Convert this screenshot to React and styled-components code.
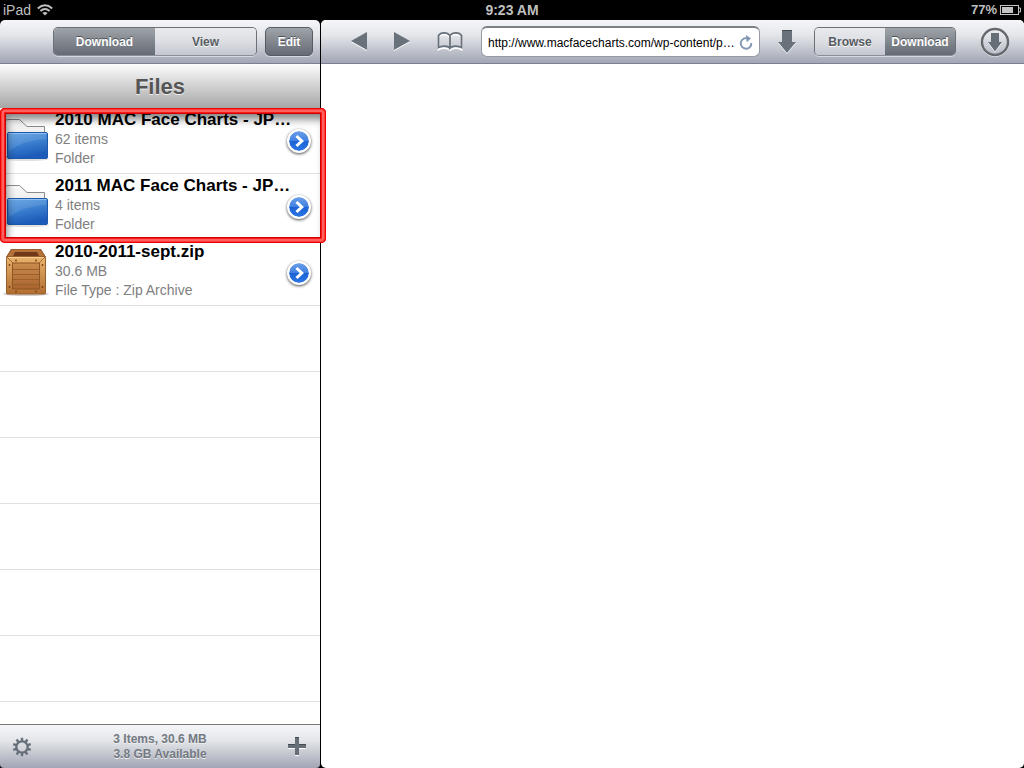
import styled, { createGlobalStyle, css } from "styled-components";

const files = [
  { name: "2010 MAC Face Charts - JP…", size: "62 items", kind: "Folder", icon: "folder" },
  { name: "2011 MAC Face Charts - JP…", size: "4 items", kind: "Folder", icon: "folder" },
  { name: "2010-2011-sept.zip", size: "30.6 MB", kind: "File Type : Zip Archive", icon: "crate" },
];
const emptyRows = [1, 2, 3, 4, 5, 6, 7];

const WifiIcon = () => (
  <svg width="16" height="12" viewBox="0 0 16 12" fill="none" stroke="#bfbfbf" strokeWidth="2">
    <path d="M0.8 4.4Q8 -2 15.2 4.4" />
    <path d="M3.4 7Q8 3 12.6 7" />
    <path d="M8 11.6L5.4 9Q8 6.8 10.6 9Z" fill="#bfbfbf" stroke="none" />
  </svg>
);

const BatteryIcon = () => (
  <svg width="21" height="10" viewBox="0 0 21 10">
    <rect x="0.5" y="0.5" width="18" height="9" fill="none" stroke="#c4c4c4" />
    <rect x="2" y="2" width="11" height="6" fill="#c4c4c4" />
    <path d="M19 3h1.5v4H19" fill="none" stroke="#c4c4c4" />
  </svg>
);

const BookIcon = () => (
  <svg width="26" height="19" viewBox="0 0 26 19" fill="none" strokeWidth="1.8">
    <path d="M13 17C10.5 14.500 5 14.500 1.500 16.500V4C4 0.500 10 0.500 13 4C16 0.500 22 0.500 24.500 4V16.500C21 14.500 15.500 14.500 13 17V4" stroke="#fff" transform="translate(0 1)" />
    <path d="M13 16C10.5 13.500 5 13.500 1.500 15.500V3.500C4 0 10 0 13 3.500C16 0 22 0 24.500 3.500V15.500C21 13.500 15.500 13.500 13 16V3.500" stroke="#69717b" />
  </svg>
);

const ReloadIcon = () => (
  <svg width="14" height="15" viewBox="0 0 14 15">
    <path d="M8 3.200A5.300 5.300 0 1 0 12.300 8" fill="none" stroke="#8295b3" strokeWidth="1.900" />
    <path d="M7 0L12 3.600L7.600 7.200Z" fill="#8295b3" />
  </svg>
);

const GearIcon = () => (
  <svg width="20" height="20" viewBox="0 0 20 20" stroke="#666e78" fill="none">
    <circle cx="10" cy="10" r="5.700" strokeWidth="2.300" />
    {[0, 36, 72, 108, 144, 180, 216, 252, 288, 324].map((a) => (
      <path key={a} d="M10 0.800V4" strokeWidth="2.400" transform={`rotate(${a} 10 10)`} />
    ))}
  </svg>
);

const FolderIcon = () => (
  <svg width="48" height="48" viewBox="0 0 48 48">
    <defs>
      <linearGradient id="blue" x1="0" y1="0" x2="0.3" y2="1">
        <stop offset="0" stopColor="#5c9fe2" />
        <stop offset="0.5" stopColor="#3b80d0" />
        <stop offset="1" stopColor="#1c5bb8" />
      </linearGradient>
      <linearGradient id="paper" x1="0" y1="0" x2="0" y2="1">
        <stop offset="0" stopColor="#fafafa" />
        <stop offset="1" stopColor="#d8d8d8" />
      </linearGradient>
    </defs>
    <ellipse cx="24" cy="42" rx="23" ry="2" fill="#000" opacity="0.12" />
    <path d="M3.5 40V4.5Q3.500 2.500 5.500 2.500H17.500L25 9.500H42.500V40Z" fill="url(#paper)" stroke="#8c8c8c" />
    <rect x="5.500" y="15.500" width="40" height="26" rx="1.500" fill="url(#blue)" stroke="#1e58ad" />
    <path d="M6.500 16.500H44.500" stroke="#8dc0f0" />
    <path d="M7 17H44V22Q22 23 7 34Z" fill="#fff" opacity="0.1" />
  </svg>
);

const CrateIcon = () => (
  <svg width="48" height="48" viewBox="0 0 48 48">
    <defs>
      <linearGradient id="wood" x1="0" y1="0" x2="0" y2="1">
        <stop offset="0" stopColor="#e8b36d" />
        <stop offset="1" stopColor="#b26e30" />
      </linearGradient>
      <linearGradient id="panel" x1="0" y1="0" x2="0" y2="1">
        <stop offset="0" stopColor="#c98b4d" />
        <stop offset="1" stopColor="#a9642f" />
      </linearGradient>
    </defs>
    <ellipse cx="24" cy="45" rx="23" ry="2" fill="#000" opacity="0.18" />
    <path d="M9.500 0H38.500L43.500 8H4.500Z" fill="#b5713a" stroke="#8d5124" />
    <path d="M13 3H35L37 7H11Z" fill="#70391a" />
    <rect x="4.500" y="8" width="39" height="37" rx="1" fill="url(#wood)" stroke="#99602b" />
    <path d="M5 8.500H43" stroke="#f5cf91" />
    <rect x="10.500" y="14" width="27" height="26" fill="url(#panel)" stroke="#8f5523" />
    <path d="M11 20.500H37M11 25.500H37M11 30.500H37M11 35.500H37" stroke="#9c602b" />
    <path d="M5 8L11 14M43 8L37 14M5 45L11 40M43 45L37 40" stroke="#a76a34" />
    <g fill="#754019">
      <circle cx="7.500" cy="16" r="0.9" /><circle cx="40.500" cy="16" r="0.9" />
      <circle cx="7.500" cy="38" r="0.9" /><circle cx="40.500" cy="38" r="0.9" />
      <circle cx="14" cy="11.500" r="0.9" /><circle cx="34" cy="11.500" r="0.9" />
      <circle cx="14" cy="42.500" r="0.9" /><circle cx="34" cy="42.500" r="0.9" />
    </g>
  </svg>
);

const App = () => {
  return (
    <Screen>
      <GlobalStyle />
      <StatusBar>
        <StatusSide>iPad <WifiIcon /></StatusSide>
        <span>9:23 AM</span>
        <StatusSide $end>77% <BatteryIcon /></StatusSide>
      </StatusBar>
      <Panes>
        <Sidebar>
          <Toolbar $end>
            <Segmented>
              <Segment $wide $active>Download</Segment>
              <Segment $wide>View</Segment>
            </Segmented>
            <EditButton>Edit</EditButton>
          </Toolbar>
          <Heading>Files</Heading>
          <ListArea>
            <FileList>
              {files.map((file) => (
                <FileRow key={file.name}>
                  {file.icon === "folder" ? <FolderIcon /> : <CrateIcon />}
                  <FileInfo>
                    <h2>{file.name}</h2>
                    <p>{file.size}</p>
                    <p>{file.kind}</p>
                  </FileInfo>
                  <Disclosure aria-label={`Open ${file.name}`}>
                    <svg width="20" height="20" viewBox="0 0 20 20" fill="none">
                      <path d="M7.500 5L12.800 10L7.500 15" stroke="#fff" strokeWidth="3" />
                    </svg>
                  </Disclosure>
                </FileRow>
              ))}
              {emptyRows.map((row) => (
                <FileRow key={row} />
              ))}
            </FileList>
            <Highlight />
          </ListArea>
          <BottomBar>
            <IconButton aria-label="Settings"><GearIcon /></IconButton>
            <Summary>
              3 Items, 30.6 MB
              <br />
              3.8 GB Available
            </Summary>
            <IconButton aria-label="Add">
              <svg width="18" height="19" viewBox="0 0 18 19">
                <path d="M7 1H11V8H18V12H11V19H7V12H0V8H7Z" fill="#fff" />
                <path d="M7 0H11V7H18V11H11V18H7V11H0V7H7Z" fill="#666e78" />
                <path d="M0 7.500H7M11 7.500H18M7 0.500H11" stroke="#454b53" />
              </svg>
            </IconButton>
          </BottomBar>
        </Sidebar>
        <Browser>
          <Toolbar>
            <NavGroup>
              <IconButton aria-label="Back">
                <svg width="16" height="19" viewBox="0 0 16 19">
                  <path d="M0 10L16 1V19Z" fill="#fff" />
                  <path d="M0 9L16 0V18Z" fill="#69717b" />
                </svg>
              </IconButton>
              <IconButton aria-label="Forward">
                <svg width="16" height="19" viewBox="0 0 16 19">
                  <path d="M16 10L0 1V19Z" fill="#fff" />
                  <path d="M16 9L0 0V18Z" fill="#69717b" />
                </svg>
              </IconButton>
              <IconButton aria-label="Bookmarks"><BookIcon /></IconButton>
            </NavGroup>
            <AddressBar>
              <input aria-label="Address" defaultValue="http://www.macfacecharts.com/wp-content/p…" />
              <ReloadButton aria-label="Reload"><ReloadIcon /></ReloadButton>
            </AddressBar>
            <IconButton aria-label="Save page">
              <svg width="18" height="24" viewBox="0 0 18 24">
                <path d="M4 1H14V13H18L9 24L0 13H4Z" fill="#fff" />
                <path d="M4 0H14V12H18L9 23L0 12H4Z" fill="#69717b" />
                <path d="M4 0.500H14" stroke="#454b53" />
              </svg>
            </IconButton>
            <Segmented>
              <Segment>Browse</Segment>
              <Segment $active>Download</Segment>
            </Segmented>
            <DownloadsButton aria-label="Downloads">
              <svg width="30" height="30" viewBox="0 0 30 30">
                <circle cx="15" cy="15.500" r="13" fill="none" stroke="#fff" strokeWidth="2.500" />
                <circle cx="15" cy="15" r="13" fill="none" stroke="#666a70" strokeWidth="2.500" />
                <path d="M11 7H19V16H22L15 25.500L8 16H11Z" fill="#fff" />
                <path d="M11 6H19V15H22L15 24.500L8 15H11Z" fill="#666e78" />
              </svg>
            </DownloadsButton>
          </Toolbar>
        </Browser>
      </Panes>
    </Screen>
  );
};
export default App;

const GlobalStyle = createGlobalStyle`
  * {
    box-sizing: border-box;
    margin: 0;
    padding: 0;
  }
  body {
    background: #000;
    font-family: "Liberation Sans", Arial, sans-serif;
  }
  button {
    border: none;
    background: none;
    font-family: inherit;
    cursor: pointer;
  }
  svg {
    display: block;
    flex-shrink: 0;
  }
`;

const chrome = css`
  background: linear-gradient(#f5f6f8, #e4e6ea 35%, #c6c9d1 65%, #a1a5b5);
`;
const darkButton = css`
  color: #fff;
  text-shadow: 0 -1px 0 #4b5057;
  background: linear-gradient(#a0a4aa, #82878e 50%, #656b74);
`;

const Screen = styled.div`
  display: flex;
  flex-direction: column;
  height: 100vh;
`;

const StatusBar = styled.header`
  display: grid;
  grid-template-columns: 1fr auto 1fr;
  align-items: center;
  height: 20px;
  padding: 0 3px;
  color: #bfbfbf;
  font-size: 14px;
  font-weight: bold;
  line-height: 20px;
`;

const StatusSide = styled.div`
  display: flex;
  align-items: center;
  gap: ${(props) => (props.$end ? "3px" : "6px")};
  justify-content: ${(props) => (props.$end ? "flex-end" : "flex-start")};
  font-size: ${(props) => (props.$end ? "13px" : "14px")};
  font-weight: ${(props) => (props.$end ? "bold" : "normal")};
`;

const Panes = styled.div`
  display: flex;
  flex: 1;
  gap: 1px;
  min-height: 0;
`;

const Sidebar = styled.aside`
  display: flex;
  flex-direction: column;
  width: 320px;
  flex-shrink: 0;
`;

const Toolbar = styled.div`
  ${chrome}
  display: flex;
  align-items: center;
  justify-content: ${(props) => (props.$end ? "flex-end" : "flex-start")};
  gap: ${(props) => (props.$end ? "8px" : "18px")};
  height: 44px;
  flex-shrink: 0;
  padding: ${(props) => (props.$end ? "0 7px" : "0 14px 0 30px")};
  border-bottom: 1px solid #7b7f92;
  border-radius: 5px 5px 0 0;
`;

const Segmented = styled.div`
  display: flex;
  flex-shrink: 0;
  height: 29px;
  border: 1px solid #6c7077;
  border-bottom-color: #8a8e96;
  border-radius: 5px;
  overflow: hidden;
  box-shadow: 0 1px 0 #d5d8df;
`;

const Segment = styled.button`
  width: ${(props) => (props.$wide ? "101px" : "70px")};
  color: #565b62;
  font-size: 12px;
  font-weight: bold;
  text-shadow: 0 1px 0 #fff;
  background: linear-gradient(#e9eaed, #dcdee4 50%, #c3c6d0);
  ${(props) => props.$active && darkButton}
`;

const EditButton = styled.button`
  ${darkButton}
  width: 48px;
  height: 29px;
  border: 1px solid #565b64;
  border-radius: 5px;
  font-size: 12px;
  font-weight: bold;
  box-shadow: 0 1px 0 #d5d8df;
`;

const Heading = styled.h1`
  height: 44px;
  flex-shrink: 0;
  background: linear-gradient(#fdfdfd, #a6a6a6);
  color: #555;
  font-size: 22px;
  line-height: 46px;
  text-align: center;
  text-shadow: 0 1px 0 #eee;
`;

const ListArea = styled.div`
  position: relative;
  flex: 1;
  min-height: 0;
`;

const FileList = styled.ul`
  height: 100%;
  overflow: hidden;
  list-style: none;
  background: #fff;
`;

const FileRow = styled.li`
  display: flex;
  align-items: center;
  height: 66px;
  padding: 0 9px 0 2px;
  border-bottom: 1px solid #e0e0e0;
`;

const FileInfo = styled.div`
  flex: 1;
  min-width: 0;
  padding: 0 0 4px 5px;
  h2 {
    font-size: 17px;
    line-height: 20px;
    white-space: nowrap;
  }
  p {
    color: #808080;
    font-size: 14px;
    line-height: 19px;
  }
`;

const Disclosure = styled.button`
  flex-shrink: 0;
  width: 24px;
  height: 24px;
  border: 2px solid #fff;
  border-radius: 50%;
  background: linear-gradient(#6d9fe9, #3f7fe0 50%, #1d62d5 51%, #2a76e6);
  background-clip: padding-box;
  background-color: #fff;
  box-shadow: 0 1px 3px rgba(0, 0, 0, 0.7);
`;

const Highlight = styled.div`
  position: absolute;
  top: 0;
  left: 0;
  right: -6px;
  height: 135px;
  border-radius: 5px;
  pointer-events: none;
  box-shadow: inset 0 0 0 1px #f00000, inset 0 0 0 2px #ff3c38,
    inset 0 0 0 4px #ff625e, inset 0 0 0 5px #ff1a1a,
    inset 0 0 0 6px #d00000, inset 3px 7px 8px 4px rgba(0, 0, 0, 0.5);
`;

const BottomBar = styled.footer`
  ${chrome}
  display: flex;
  align-items: center;
  justify-content: space-between;
  height: 44px;
  flex-shrink: 0;
  padding: 0 14px 0 12px;
  border-top: 1px solid #777;
  border-radius: 0 0 4px 4px;
`;

const Summary = styled.p`
  color: #737a83;
  font-size: 12px;
  font-weight: bold;
  line-height: 15px;
  text-align: center;
  text-shadow: 0 1px 0 #eee;
`;

const IconButton = styled.button`
  display: flex;
  flex-shrink: 0;
`;

const DownloadsButton = styled(IconButton)`
  margin-left: 6px;
`;

const Browser = styled.main`
  flex: 1;
  min-width: 0;
  background: #fff;
  border-radius: 5px;
`;

const NavGroup = styled.nav`
  display: flex;
  align-items: center;
  gap: 27px;
`;

const AddressBar = styled.div`
  display: flex;
  align-items: center;
  flex: 1;
  min-width: 0;
  height: 31px;
  padding: 0 6px;
  border: 1px solid #969aa3;
  border-top: 2px solid #7c8087;
  border-radius: 6px;
  background: #fff;
  input {
    flex: 1;
    min-width: 0;
    padding-top: 2px;
    border: none;
    outline: none;
    background: none;
    font-family: inherit;
    font-size: 12px;
  }
`;

const ReloadButton = styled.button`
  display: flex;
`;
